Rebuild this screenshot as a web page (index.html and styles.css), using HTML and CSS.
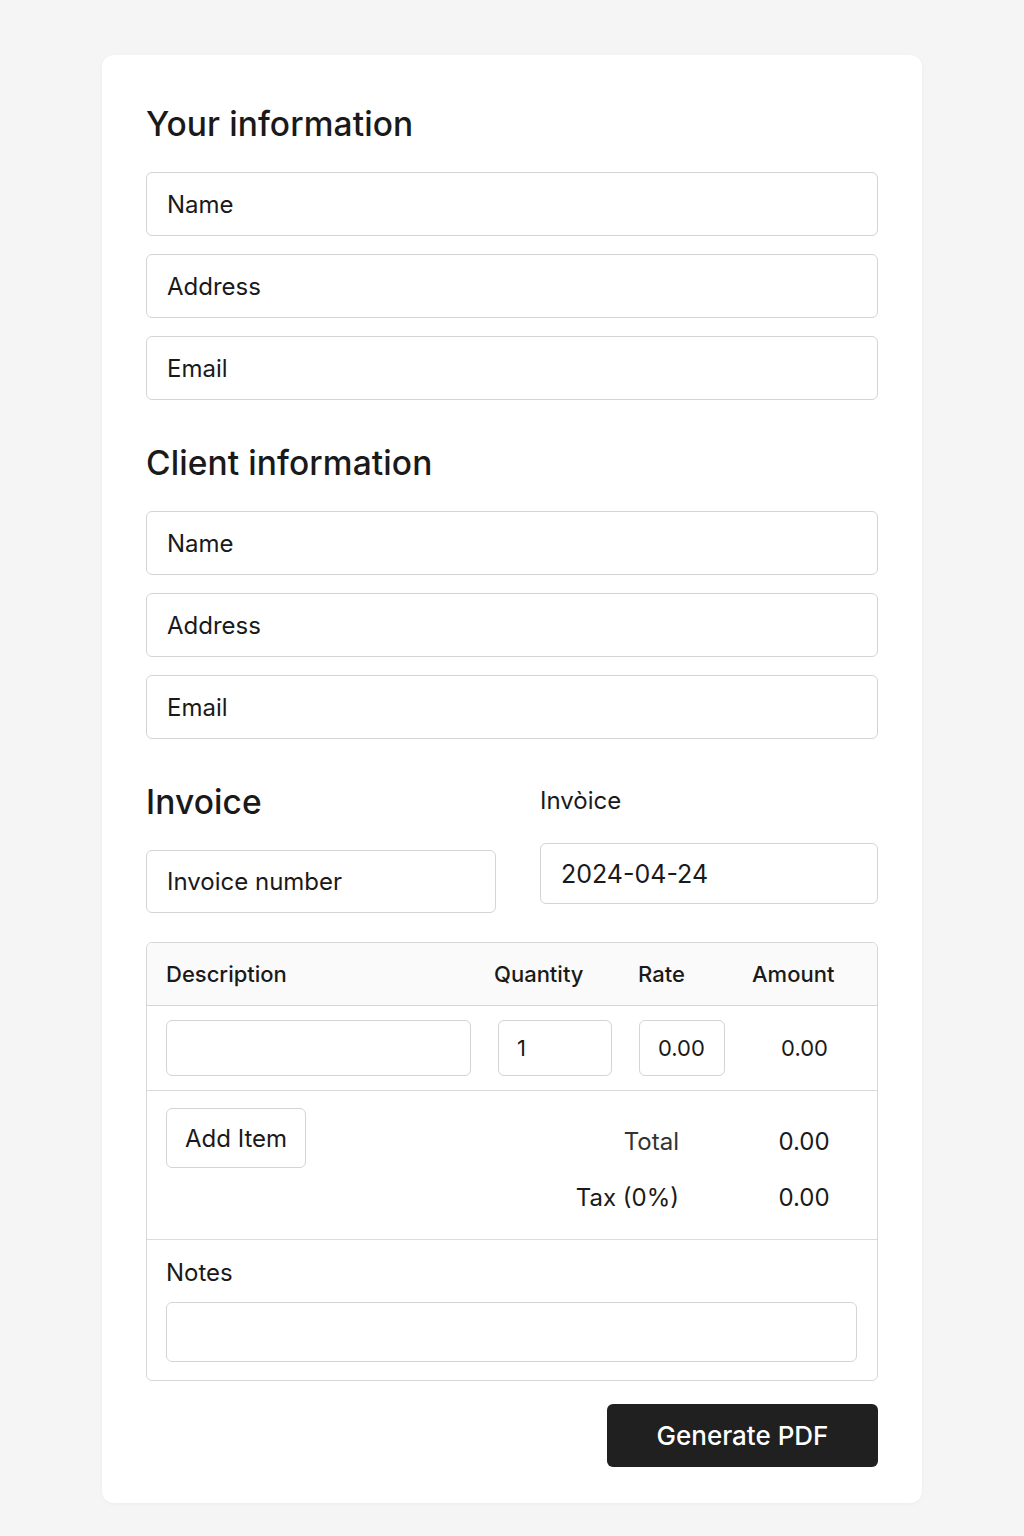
FILE: index.html
```html
<!DOCTYPE html>
<html lang="en">
<head>
    <meta charset="UTF-8">
    <meta name="viewport" content="width=device-width, initial-scale=1.0">
    <title>Invoice</title>
    <link rel="stylesheet" href="styles.css">
</head>
<body>
    <div class="card">
        <h2>Your information</h2>
        <div class="fields">
            <input type="text" placeholder="Name">
            <input type="text" placeholder="Address">
            <input type="text" placeholder="Email">
        </div>

        <h2 class="section">Client information</h2>
        <div class="fields">
            <input type="text" placeholder="Name">
            <input type="text" placeholder="Address">
            <input type="text" placeholder="Email">
        </div>

        <div class="invoice-meta">
            <div class="meta-col">
                <h2>Invoice</h2>
                <input type="text" class="inv-number" placeholder="Invoice number">
            </div>
            <div class="meta-col">
                <label class="meta-label">Invòice</label>
                <input type="text" class="inv-date" value="2024-04-24">
            </div>
        </div>

        <div class="items">
            <div class="row head">
                <span>Description</span>
                <span>Quantity</span>
                <span>Rate</span>
                <span>Amount</span>
            </div>
            <div class="row item">
                <input type="text" class="cell">
                <input type="text" class="cell" value="1">
                <input type="text" class="cell" value="0.00">
                <span class="amount">0.00</span>
            </div>
            <div class="summary">
                <button class="add-btn">Add Item</button>
                <div class="totals">
                    <span class="t-label">Total</span>
                    <span class="t-value">0.00</span>
                    <span class="t-label tax">Tax (0%)</span>
                    <span class="t-value">0.00</span>
                </div>
            </div>
            <div class="notes">
                <label>Notes</label>
                <input type="text" class="notes-input">
            </div>
        </div>

        <div class="actions">
            <button class="generate">Generate PDF</button>
        </div>
    </div>
</body>
</html>
```

FILE: styles.css
```css
body {
    font-family: Inter, "Noto Sans", sans-serif;
    margin: 0;
    padding: 55px 0 32px;
    background-color: #f5f5f5;
    color: #1a1a1a;
}
.card {
    width: 820px;
    box-sizing: border-box;
    margin: 0 auto;
    background: white;
    padding: 49px 44px 36px;
    border-radius: 12px;
    box-shadow: 0 1px 4px rgba(0,0,0,0.04);
}
h2 {
    font-size: 33.5px;
    line-height: 40px;
    font-weight: 500;
    margin: 0 0 28px;
    letter-spacing: 0.1px;
}
h2.section {
    margin-top: 43px;
}
.fields {
    display: flex;
    flex-direction: column;
    gap: 18px;
}
input {
    font-family: inherit;
    font-size: 24px;
    color: #1a1a1a;
    box-sizing: border-box;
    border: 1px solid #d4d4d4;
    border-radius: 6px;
    background: white;
    padding: 0 20px;
    height: 64px;
    width: 100%;
    outline: none;
}
input::placeholder {
    color: #1a1a1a;
    opacity: 1;
}
.invoice-meta {
    display: grid;
    grid-template-columns: 350px 1fr;
    column-gap: 44px;
    margin-top: 43px;
}
.meta-label {
    display: block;
    font-size: 24px;
    line-height: 32px;
    margin: 3px 0 26px;
}
.inv-number {
    height: 63px;
}
.inv-date {
    height: 61px;
    font-size: 25px;
}
.items {
    margin-top: 29px;
    border: 1px solid #d6d6d6;
    border-radius: 6px;
    overflow: hidden;
}
.row {
    display: grid;
    grid-template-columns: 305px 114px 86px 1fr;
    column-gap: 27px;
    align-items: center;
    padding: 0 20px 0 19px;
}
.head {
    height: 62px;
    background: #fafafa;
    border-bottom: 1px solid #d6d6d6;
    font-size: 22px;
    font-weight: 500;
}
.head span:nth-child(2) {
    margin-left: -4px;
}
.head span:nth-child(3) {
    margin-left: -1px;
}
.item {
    height: 84px;
    border-bottom: 1px solid #dcdcdc;
}
.cell {
    height: 56px;
    font-size: 22px;
    padding: 0 18px;
}
.amount {
    font-size: 22px;
    text-align: center;
}
.summary {
    display: flex;
    justify-content: space-between;
    align-items: flex-start;
    height: 149px;
    box-sizing: border-box;
    padding: 17px 20px 0 19px;
    border-bottom: 1px solid #dcdcdc;
}
.add-btn {
    font-family: inherit;
    font-size: 24px;
    color: #1a1a1a;
    background: white;
    border: 1px solid #d4d4d4;
    border-radius: 6px;
    height: 60px;
    padding: 0 18px;
}
.totals {
    display: grid;
    grid-template-columns: auto 106px;
    column-gap: 72px;
    row-gap: 24px;
    padding-top: 18px;
    font-size: 24px;
    line-height: 32px;
}
.t-label {
    text-align: right;
    color: #333;
}
.t-label.tax {
    color: #1a1a1a;
}
.t-value {
    text-align: center;
}
.notes {
    padding: 18px 20px 18px 19px;
}
.notes label {
    display: block;
    font-size: 24px;
    line-height: 30px;
    margin-bottom: 14px;
}
.notes-input {
    height: 60px;
}
.actions {
    display: flex;
    justify-content: flex-end;
    margin-top: 23px;
}
.generate {
    font-family: inherit;
    font-size: 26px;
    font-weight: 500;
    color: white;
    background: #202020;
    border: none;
    border-radius: 6px;
    width: 271px;
    height: 63px;
}
```
